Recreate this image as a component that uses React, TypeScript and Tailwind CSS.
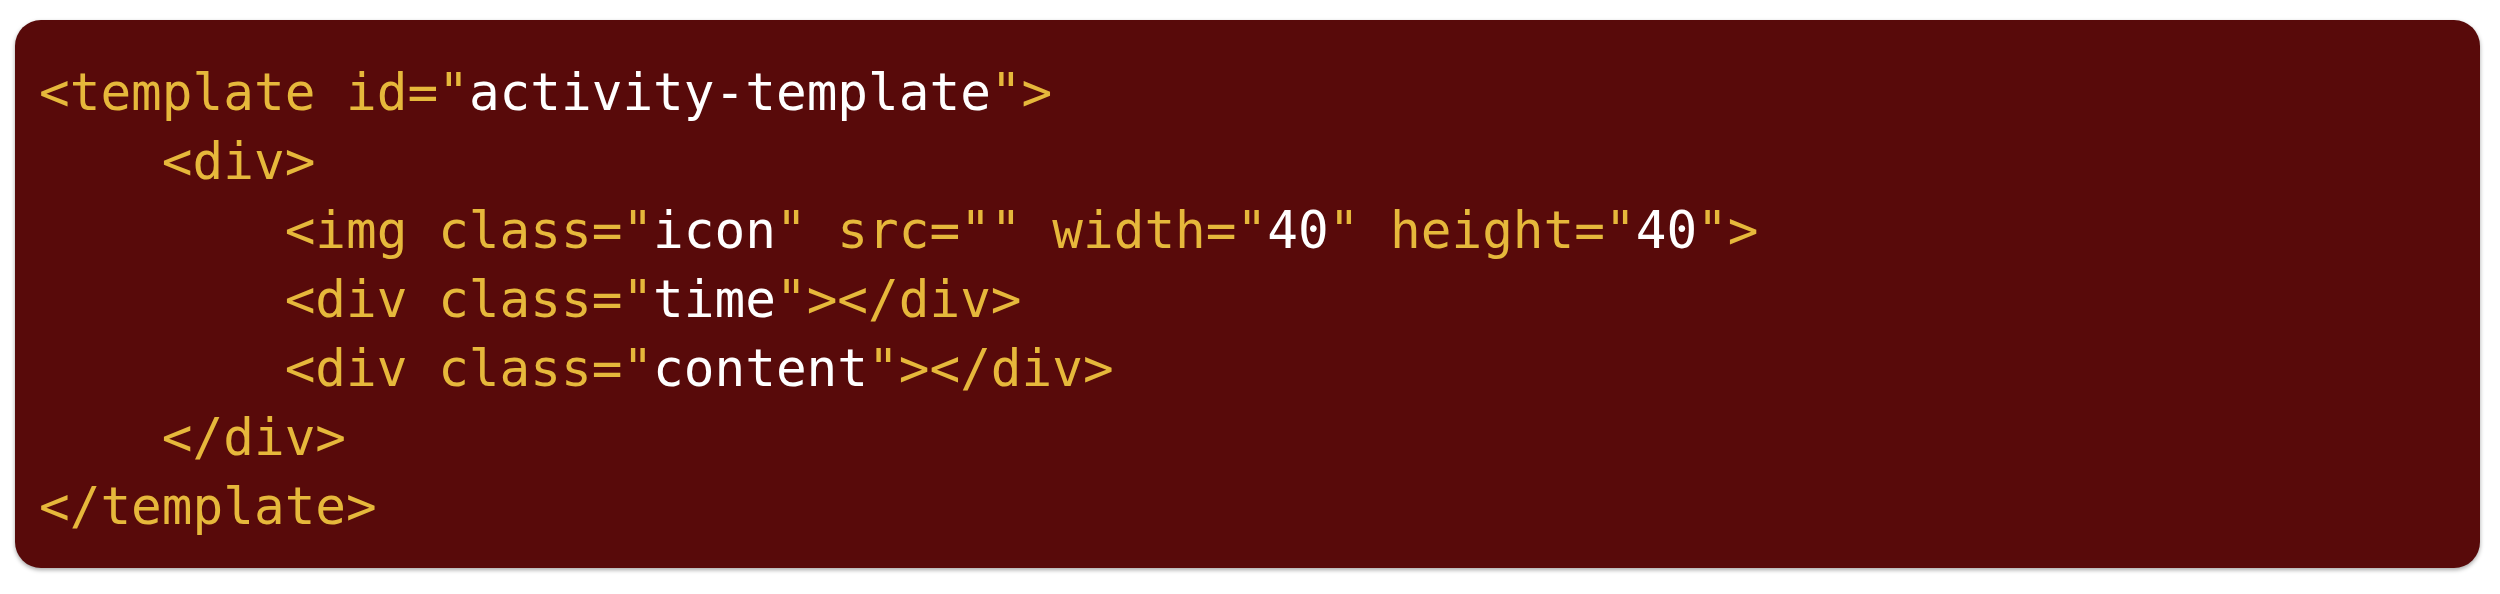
const Y = ({ children }: { children: React.ReactNode }) => (
  <span className="text-[#e6b83b]">{children}</span>
)
const W = ({ children }: { children: React.ReactNode }) => (
  <span className="text-white">{children}</span>
)

export default function App() {
  return (
    <div className="w-[2500px] h-[594px] bg-white pt-[20px] pl-[15px]">
      <div className="w-[2465px] h-[548px] rounded-[26px] bg-[#580a0a] shadow-[0_2px_4px_rgba(0,0,0,0.35)] pt-[38px] pl-[24px]">
        <pre className="font-['DejaVu_Sans_Mono',monospace] text-[51px] leading-[69px]">
          <Y>{'<template id="'}</Y><W>activity-template</W><Y>{'">'}</Y>
          {'\n'}
          <Y>{'    <div>'}</Y>
          {'\n'}
          <Y>{'        <img class="'}</Y><W>icon</W><Y>{'" src="" width="'}</Y><W>40</W>
          <Y>{'" height="'}</Y><W>40</W><Y>{'">'}</Y>
          {'\n'}
          <Y>{'        <div class="'}</Y><W>time</W><Y>{'"></div>'}</Y>
          {'\n'}
          <Y>{'        <div class="'}</Y><W>content</W><Y>{'"></div>'}</Y>
          {'\n'}
          <Y>{'    </div>'}</Y>
          {'\n'}
          <Y>{'</template>'}</Y>
        </pre>
      </div>
    </div>
  )
}
